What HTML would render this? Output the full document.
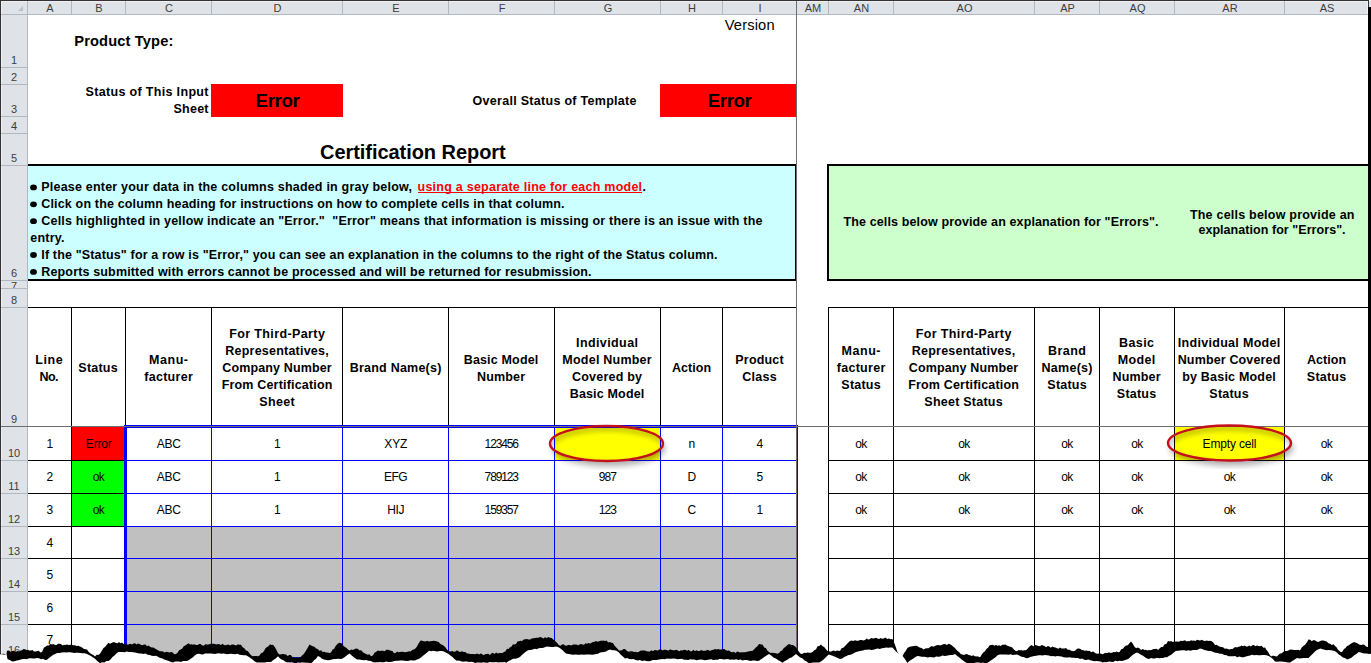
<!DOCTYPE html>
<html><head><meta charset="utf-8"><title>Certification Report</title>
<style>
html,body{margin:0;padding:0;background:#fff;width:1371px;height:663px;overflow:hidden}
svg{display:block}
text{font-family:"Liberation Sans",sans-serif;fill:#000;white-space:pre}
.hd{font-size:11px;fill:#3c3c3c}
.b{font-size:12.5px;font-weight:bold}
.d{font-size:12px}
.pt{font-size:14.67px;font-weight:bold}
.ver{font-size:14.67px}
.err{font-size:18.67px;font-weight:bold}
.cr{font-size:20px;font-weight:bold}
</style></head><body>
<svg width="1371" height="663" viewBox="0 0 1371 663" shape-rendering="crispEdges">
<defs>
<filter id="blur" x="-20%" y="-50%" width="140%" height="200%"><feGaussianBlur stdDeviation="3"/></filter>
<filter id="blur2" x="-20%" y="-50%" width="140%" height="200%"><feGaussianBlur stdDeviation="2"/></filter>
<radialGradient id="yg" cx="50%" cy="55%" r="50%"><stop offset="0.7" stop-color="#ffff00"/><stop offset="1" stop-color="#d8d800"/></radialGradient>
</defs>
<rect x="0" y="0" width="1371" height="663" fill="#ffffff"/>
<rect x="211" y="84" width="132" height="33" fill="#ff0000"/>
<rect x="660" y="84" width="136" height="33" fill="#ff0000"/>
<rect x="28" y="166" width="767" height="113" fill="#ccffff"/>
<rect x="829" y="166" width="540" height="113" fill="#ccffcc"/>
<rect x="72" y="427" width="52" height="33" fill="#ff0000"/>
<rect x="72" y="461" width="52" height="32" fill="#00ff00"/>
<rect x="72" y="494" width="52" height="32" fill="#00ff00"/>
<rect x="555" y="427" width="105" height="33" fill="#ffff00"/>
<rect x="1175" y="427" width="109" height="33" fill="#ffff00"/>
<rect x="126" y="527" width="670" height="136" fill="#c0c0c0"/>
<rect x="28" y="164" width="769" height="2" fill="#000000"/>
<rect x="28" y="279" width="769" height="2" fill="#000000"/>
<rect x="795" y="164" width="2" height="117" fill="#000000"/>
<rect x="827" y="164" width="542" height="2" fill="#000000"/>
<rect x="827" y="279" width="542" height="2" fill="#000000"/>
<rect x="827" y="164" width="2" height="117" fill="#000000"/>
<rect x="28" y="307" width="769" height="1" fill="#000000"/>
<rect x="71" y="307" width="1" height="120" fill="#000000"/>
<rect x="125" y="307" width="1" height="120" fill="#000000"/>
<rect x="211" y="307" width="1" height="120" fill="#000000"/>
<rect x="342" y="307" width="1" height="120" fill="#000000"/>
<rect x="448" y="307" width="1" height="120" fill="#000000"/>
<rect x="554" y="307" width="1" height="120" fill="#000000"/>
<rect x="660" y="307" width="1" height="120" fill="#000000"/>
<rect x="722" y="307" width="1" height="120" fill="#000000"/>
<rect x="828" y="307" width="541" height="1" fill="#000000"/>
<rect x="828" y="307" width="1" height="357" fill="#000000"/>
<rect x="893" y="307" width="1" height="357" fill="#000000"/>
<rect x="1034" y="307" width="1" height="357" fill="#000000"/>
<rect x="1099" y="307" width="1" height="357" fill="#000000"/>
<rect x="1174" y="307" width="1" height="357" fill="#000000"/>
<rect x="1284" y="307" width="1" height="357" fill="#000000"/>
<rect x="28" y="460" width="97" height="1" fill="#000000"/>
<rect x="125" y="460" width="672" height="1" fill="#0000ff"/>
<rect x="828" y="460" width="541" height="1" fill="#000000"/>
<rect x="28" y="493" width="97" height="1" fill="#000000"/>
<rect x="125" y="493" width="672" height="1" fill="#0000ff"/>
<rect x="828" y="493" width="541" height="1" fill="#000000"/>
<rect x="28" y="526" width="97" height="1" fill="#000000"/>
<rect x="125" y="526" width="672" height="1" fill="#0000ff"/>
<rect x="828" y="526" width="541" height="1" fill="#000000"/>
<rect x="28" y="558" width="97" height="1" fill="#000000"/>
<rect x="125" y="558" width="672" height="1" fill="#0000ff"/>
<rect x="828" y="558" width="541" height="1" fill="#000000"/>
<rect x="28" y="591" width="97" height="1" fill="#000000"/>
<rect x="125" y="591" width="672" height="1" fill="#0000ff"/>
<rect x="828" y="591" width="541" height="1" fill="#000000"/>
<rect x="28" y="624" width="97" height="1" fill="#000000"/>
<rect x="125" y="624" width="672" height="1" fill="#0000ff"/>
<rect x="828" y="624" width="541" height="1" fill="#000000"/>
<rect x="28" y="657" width="97" height="1" fill="#000000"/>
<rect x="125" y="657" width="672" height="1" fill="#0000ff"/>
<rect x="828" y="657" width="541" height="1" fill="#000000"/>
<rect x="71" y="426" width="1" height="238" fill="#000000"/>
<rect x="211" y="426" width="1" height="238" fill="#0000ff"/>
<rect x="342" y="426" width="1" height="238" fill="#0000ff"/>
<rect x="448" y="426" width="1" height="238" fill="#0000ff"/>
<rect x="554" y="426" width="1" height="238" fill="#0000ff"/>
<rect x="660" y="426" width="1" height="238" fill="#0000ff"/>
<rect x="722" y="426" width="1" height="238" fill="#0000ff"/>
<rect x="124" y="425" width="3" height="239" fill="#0000ff"/>
<rect x="124" y="425" width="674" height="3" fill="#0000ff"/>
<rect x="796" y="425" width="2" height="239" fill="#0000ff"/>
<rect x="1" y="1" width="1370" height="13" fill="#dfe3e8"/>
<rect x="1" y="1" width="26" height="662" fill="#dfe3e8"/>
<rect x="1" y="1" width="1367" height="1" fill="#eef0f3"/>
<rect x="1" y="1" width="1" height="662" fill="#eef0f3"/>
<rect x="1" y="14" width="1367" height="1" fill="#b2b8bf"/>
<rect x="27" y="1" width="1" height="662" fill="#b2b8bf"/>
<rect x="71" y="1" width="1" height="13" fill="#b2b8bf"/>
<rect x="125" y="1" width="1" height="13" fill="#b2b8bf"/>
<rect x="211" y="1" width="1" height="13" fill="#b2b8bf"/>
<rect x="342" y="1" width="1" height="13" fill="#b2b8bf"/>
<rect x="448" y="1" width="1" height="13" fill="#b2b8bf"/>
<rect x="554" y="1" width="1" height="13" fill="#b2b8bf"/>
<rect x="660" y="1" width="1" height="13" fill="#b2b8bf"/>
<rect x="722" y="1" width="1" height="13" fill="#b2b8bf"/>
<rect x="796" y="1" width="1" height="13" fill="#b2b8bf"/>
<rect x="828" y="1" width="1" height="13" fill="#b2b8bf"/>
<rect x="893" y="1" width="1" height="13" fill="#b2b8bf"/>
<rect x="1034" y="1" width="1" height="13" fill="#b2b8bf"/>
<rect x="1099" y="1" width="1" height="13" fill="#b2b8bf"/>
<rect x="1174" y="1" width="1" height="13" fill="#b2b8bf"/>
<rect x="1284" y="1" width="1" height="13" fill="#b2b8bf"/>
<rect x="1" y="67" width="26" height="1" fill="#b2b8bf"/>
<rect x="1" y="84" width="26" height="1" fill="#b2b8bf"/>
<rect x="1" y="116" width="26" height="1" fill="#b2b8bf"/>
<rect x="1" y="133" width="26" height="1" fill="#b2b8bf"/>
<rect x="1" y="165" width="26" height="1" fill="#b2b8bf"/>
<rect x="1" y="280" width="26" height="1" fill="#b2b8bf"/>
<rect x="1" y="288" width="26" height="1" fill="#b2b8bf"/>
<rect x="1" y="307" width="26" height="1" fill="#b2b8bf"/>
<rect x="1" y="426" width="26" height="1" fill="#b2b8bf"/>
<rect x="1" y="460" width="26" height="1" fill="#b2b8bf"/>
<rect x="1" y="493" width="26" height="1" fill="#b2b8bf"/>
<rect x="1" y="526" width="26" height="1" fill="#b2b8bf"/>
<rect x="1" y="558" width="26" height="1" fill="#b2b8bf"/>
<rect x="1" y="591" width="26" height="1" fill="#b2b8bf"/>
<rect x="1" y="624" width="26" height="1" fill="#b2b8bf"/>
<rect x="1" y="657" width="26" height="1" fill="#b2b8bf"/>
<rect x="796" y="1" width="1" height="663" fill="#6e6e6e"/>
<rect x="1" y="426" width="1368" height="1" fill="#6e6e6e"/>
<rect x="0" y="0" width="1369" height="1" fill="#333333"/>
<rect x="0" y="0" width="1" height="664" fill="#333333"/>
<rect x="1368" y="7" width="3" height="657" fill="#000000"/>
<rect x="1368" y="0" width="1" height="7" fill="#333333"/>
<polygon points="23,6 23,11 18,11" fill="#b9c0c6" shape-rendering="geometricPrecision"/>
<rect x="1367" y="1" width="1" height="13" fill="#f4f5f7"/>
<text x="50.0" y="12" class="hd" text-anchor="middle">A</text>
<text x="99.0" y="12" class="hd" text-anchor="middle">B</text>
<text x="169.0" y="12" class="hd" text-anchor="middle">C</text>
<text x="277.5" y="12" class="hd" text-anchor="middle">D</text>
<text x="396.0" y="12" class="hd" text-anchor="middle">E</text>
<text x="502.0" y="12" class="hd" text-anchor="middle">F</text>
<text x="608.0" y="12" class="hd" text-anchor="middle">G</text>
<text x="692.0" y="12" class="hd" text-anchor="middle">H</text>
<text x="760.0" y="12" class="hd" text-anchor="middle">I</text>
<text x="813.0" y="12" class="hd" text-anchor="middle">AM</text>
<text x="861.5" y="12" class="hd" text-anchor="middle">AN</text>
<text x="964.5" y="12" class="hd" text-anchor="middle">AO</text>
<text x="1067.5" y="12" class="hd" text-anchor="middle">AP</text>
<text x="1137.5" y="12" class="hd" text-anchor="middle">AQ</text>
<text x="1230.0" y="12" class="hd" text-anchor="middle">AR</text>
<text x="1327.0" y="12" class="hd" text-anchor="middle">AS</text>
<clipPath id="r7"><rect x="1" y="281" width="26" height="7"/></clipPath>
<text x="14" y="64" class="hd" text-anchor="middle">1</text>
<text x="14" y="81" class="hd" text-anchor="middle">2</text>
<text x="14" y="113" class="hd" text-anchor="middle">3</text>
<text x="14" y="130" class="hd" text-anchor="middle">4</text>
<text x="14" y="162" class="hd" text-anchor="middle">5</text>
<text x="14" y="277" class="hd" text-anchor="middle">6</text>
<text x="14" y="290" class="hd" text-anchor="middle" clip-path="url(#r7)">7</text>
<text x="14" y="304" class="hd" text-anchor="middle">8</text>
<text x="14" y="423" class="hd" text-anchor="middle">9</text>
<text x="14" y="457" class="hd" text-anchor="middle">10</text>
<text x="14" y="490" class="hd" text-anchor="middle">11</text>
<text x="14" y="523" class="hd" text-anchor="middle">12</text>
<text x="14" y="555" class="hd" text-anchor="middle">13</text>
<text x="14" y="588" class="hd" text-anchor="middle">14</text>
<text x="14" y="621" class="hd" text-anchor="middle">15</text>
<text x="14" y="654" class="hd" text-anchor="middle">16</text>
<text x="74.30" y="46" class="pt" textLength="99.00" lengthAdjust="spacing">Product Type:</text>
<text x="724.70" y="30" class="ver" textLength="49.90" lengthAdjust="spacing">Version</text>
<text x="208.50" y="96" class="b" text-anchor="end" textLength="123.00" lengthAdjust="spacing">Status of This Input</text>
<text x="208.50" y="113" class="b" text-anchor="end" textLength="35.00" lengthAdjust="spacing">Sheet</text>
<text x="277.65" y="107" class="err" text-anchor="middle" textLength="44.10" lengthAdjust="spacing">Error</text>
<text x="472.50" y="105" class="b" textLength="164.00" lengthAdjust="spacing">Overall Status of Template</text>
<text x="729.75" y="107" class="err" text-anchor="middle" textLength="43.90" lengthAdjust="spacing">Error</text>
<text x="412.85" y="159" class="cr" text-anchor="middle" textLength="185.70" lengthAdjust="spacing">Certification Report</text>
<ellipse cx="33.5" cy="187.4" rx="3.4" ry="2.9" fill="#000" shape-rendering="geometricPrecision"/>
<text x="41.30" y="191.0" class="b" textLength="370.70" lengthAdjust="spacing">Please enter your data in the columns shaded in gray below,</text>
<text x="417.50" y="191.0" class="b" style="fill:#ff0000" textLength="224.60" lengthAdjust="spacing">using a separate line for each model</text>
<rect x="418" y="192" width="224" height="1" fill="#ff0000"/>
<text x="642.50" y="191.0" class="b">.</text>
<ellipse cx="33.5" cy="204.3" rx="3.4" ry="2.9" fill="#000" shape-rendering="geometricPrecision"/>
<text x="41.30" y="207.9" class="b" textLength="523.20" lengthAdjust="spacing">Click on the column heading for instructions on how to complete cells in that column.</text>
<ellipse cx="33.5" cy="221.2" rx="3.4" ry="2.9" fill="#000" shape-rendering="geometricPrecision"/>
<text x="41.30" y="224.8" class="b" textLength="721.20" lengthAdjust="spacing">Cells highlighted in yellow indicate an &quot;Error.&quot;  &quot;Error&quot; means that information is missing or there is an issue with the</text>
<text x="30.30" y="241.7" class="b" textLength="34.21" lengthAdjust="spacing">entry.</text>
<ellipse cx="33.5" cy="255.0" rx="3.4" ry="2.9" fill="#000" shape-rendering="geometricPrecision"/>
<text x="41.30" y="258.6" class="b" textLength="676.20" lengthAdjust="spacing">If the &quot;Status&quot; for a row is &quot;Error,&quot; you can see an explanation in the columns to the right of the Status column.</text>
<ellipse cx="33.5" cy="271.9" rx="3.4" ry="2.9" fill="#000" shape-rendering="geometricPrecision"/>
<text x="41.30" y="275.5" class="b" textLength="550.20" lengthAdjust="spacing">Reports submitted with errors cannot be processed and will be returned for resubmission.</text>
<text x="843.50" y="226" class="b" textLength="315.00" lengthAdjust="spacing">The cells below provide an explanation for &quot;Errors&quot;.</text>
<text x="1272.20" y="219" class="b" text-anchor="middle" textLength="164.60" lengthAdjust="spacing">The cells below provide an</text>
<text x="1272.00" y="234" class="b" text-anchor="middle" textLength="147.20" lengthAdjust="spacing">explanation for &quot;Errors&quot;.</text>
<text x="49.00" y="363.5" class="b" text-anchor="middle" textLength="27.50" lengthAdjust="spacing">Line</text>
<text x="49.00" y="380.5" class="b" text-anchor="middle" textLength="19.00" lengthAdjust="spacing">No.</text>
<text x="98.00" y="372.0" class="b" text-anchor="middle" textLength="39.30" lengthAdjust="spacing">Status</text>
<text x="168.50" y="363.5" class="b" text-anchor="middle" textLength="39.00" lengthAdjust="spacing">Manu-</text>
<text x="168.50" y="380.5" class="b" text-anchor="middle" textLength="48.50" lengthAdjust="spacing">facturer</text>
<text x="277.00" y="338.0" class="b" text-anchor="middle" textLength="95.70" lengthAdjust="spacing">For Third-Party</text>
<text x="277.00" y="355.0" class="b" text-anchor="middle" textLength="103.30" lengthAdjust="spacing">Representatives,</text>
<text x="277.00" y="372.0" class="b" text-anchor="middle" textLength="109.40" lengthAdjust="spacing">Company Number</text>
<text x="277.00" y="389.0" class="b" text-anchor="middle" textLength="110.70" lengthAdjust="spacing">From Certification</text>
<text x="277.00" y="406.0" class="b" text-anchor="middle" textLength="35.50" lengthAdjust="spacing">Sheet</text>
<text x="395.50" y="372.0" class="b" text-anchor="middle" textLength="91.70" lengthAdjust="spacing">Brand Name(s)</text>
<text x="501.00" y="363.5" class="b" text-anchor="middle" textLength="74.60" lengthAdjust="spacing">Basic Model</text>
<text x="501.00" y="380.5" class="b" text-anchor="middle" textLength="48.10" lengthAdjust="spacing">Number</text>
<text x="607.00" y="346.5" class="b" text-anchor="middle" textLength="62.00" lengthAdjust="spacing">Individual</text>
<text x="607.00" y="363.5" class="b" text-anchor="middle" textLength="89.30" lengthAdjust="spacing">Model Number</text>
<text x="607.00" y="380.5" class="b" text-anchor="middle" textLength="70.00" lengthAdjust="spacing">Covered by</text>
<text x="607.00" y="397.5" class="b" text-anchor="middle" textLength="74.60" lengthAdjust="spacing">Basic Model</text>
<text x="691.50" y="372.0" class="b" text-anchor="middle" textLength="39.20" lengthAdjust="spacing">Action</text>
<text x="759.50" y="363.5" class="b" text-anchor="middle" textLength="48.30" lengthAdjust="spacing">Product</text>
<text x="759.50" y="380.5" class="b" text-anchor="middle" textLength="34.60" lengthAdjust="spacing">Class</text>
<text x="861.00" y="355.0" class="b" text-anchor="middle" textLength="39.00" lengthAdjust="spacing">Manu-</text>
<text x="861.00" y="372.0" class="b" text-anchor="middle" textLength="48.50" lengthAdjust="spacing">facturer</text>
<text x="861.00" y="389.0" class="b" text-anchor="middle" textLength="39.30" lengthAdjust="spacing">Status</text>
<text x="963.50" y="338.0" class="b" text-anchor="middle" textLength="95.70" lengthAdjust="spacing">For Third-Party</text>
<text x="963.50" y="355.0" class="b" text-anchor="middle" textLength="103.30" lengthAdjust="spacing">Representatives,</text>
<text x="963.50" y="372.0" class="b" text-anchor="middle" textLength="109.40" lengthAdjust="spacing">Company Number</text>
<text x="963.50" y="389.0" class="b" text-anchor="middle" textLength="110.70" lengthAdjust="spacing">From Certification</text>
<text x="963.50" y="406.0" class="b" text-anchor="middle" textLength="78.40" lengthAdjust="spacing">Sheet Status</text>
<text x="1067.00" y="355.0" class="b" text-anchor="middle" textLength="38.00" lengthAdjust="spacing">Brand</text>
<text x="1067.00" y="372.0" class="b" text-anchor="middle" textLength="51.00" lengthAdjust="spacing">Name(s)</text>
<text x="1067.00" y="389.0" class="b" text-anchor="middle" textLength="39.30" lengthAdjust="spacing">Status</text>
<text x="1136.50" y="346.5" class="b" text-anchor="middle" textLength="35.00" lengthAdjust="spacing">Basic</text>
<text x="1136.50" y="363.5" class="b" text-anchor="middle" textLength="37.30" lengthAdjust="spacing">Model</text>
<text x="1136.50" y="380.5" class="b" text-anchor="middle" textLength="48.10" lengthAdjust="spacing">Number</text>
<text x="1136.50" y="397.5" class="b" text-anchor="middle" textLength="39.30" lengthAdjust="spacing">Status</text>
<text x="1229.00" y="346.5" class="b" text-anchor="middle" textLength="102.50" lengthAdjust="spacing">Individual Model</text>
<text x="1229.00" y="363.5" class="b" text-anchor="middle" textLength="102.60" lengthAdjust="spacing">Number Covered</text>
<text x="1229.00" y="380.5" class="b" text-anchor="middle" textLength="93.60" lengthAdjust="spacing">by Basic Model</text>
<text x="1229.00" y="397.5" class="b" text-anchor="middle" textLength="39.30" lengthAdjust="spacing">Status</text>
<text x="1326.50" y="363.5" class="b" text-anchor="middle" textLength="39.20" lengthAdjust="spacing">Action</text>
<text x="1326.50" y="380.5" class="b" text-anchor="middle" textLength="39.30" lengthAdjust="spacing">Status</text>
<text x="49.80" y="448" class="d" text-anchor="middle">1</text>
<text x="98.80" y="448" class="d" text-anchor="middle" textLength="26.00" lengthAdjust="spacing">Error</text>
<text x="168.80" y="448" class="d" text-anchor="middle" textLength="24.20" lengthAdjust="spacing">ABC</text>
<text x="277.30" y="448" class="d" text-anchor="middle">1</text>
<text x="395.80" y="448" class="d" text-anchor="middle" textLength="23.30" lengthAdjust="spacing">XYZ</text>
<text x="501.80" y="448" class="d" text-anchor="middle" textLength="34.40" lengthAdjust="spacing">123456</text>
<text x="691.80" y="448" class="d" text-anchor="middle">n</text>
<text x="759.80" y="448" class="d" text-anchor="middle">4</text>
<text x="861.30" y="448" class="d" text-anchor="middle" textLength="12.10" lengthAdjust="spacing">ok</text>
<text x="964.30" y="448" class="d" text-anchor="middle" textLength="12.10" lengthAdjust="spacing">ok</text>
<text x="1067.30" y="448" class="d" text-anchor="middle" textLength="12.10" lengthAdjust="spacing">ok</text>
<text x="1137.30" y="448" class="d" text-anchor="middle" textLength="12.10" lengthAdjust="spacing">ok</text>
<text x="1326.80" y="448" class="d" text-anchor="middle" textLength="12.10" lengthAdjust="spacing">ok</text>
<text x="49.80" y="481" class="d" text-anchor="middle">2</text>
<text x="98.80" y="481" class="d" text-anchor="middle" textLength="12.10" lengthAdjust="spacing">ok</text>
<text x="168.80" y="481" class="d" text-anchor="middle" textLength="24.20" lengthAdjust="spacing">ABC</text>
<text x="277.30" y="481" class="d" text-anchor="middle">1</text>
<text x="395.80" y="481" class="d" text-anchor="middle" textLength="23.60" lengthAdjust="spacing">EFG</text>
<text x="501.80" y="481" class="d" text-anchor="middle" textLength="34.40" lengthAdjust="spacing">789123</text>
<text x="607.80" y="481" class="d" text-anchor="middle" textLength="18.20" lengthAdjust="spacing">987</text>
<text x="691.80" y="481" class="d" text-anchor="middle">D</text>
<text x="759.80" y="481" class="d" text-anchor="middle">5</text>
<text x="861.30" y="481" class="d" text-anchor="middle" textLength="12.10" lengthAdjust="spacing">ok</text>
<text x="964.30" y="481" class="d" text-anchor="middle" textLength="12.10" lengthAdjust="spacing">ok</text>
<text x="1067.30" y="481" class="d" text-anchor="middle" textLength="12.10" lengthAdjust="spacing">ok</text>
<text x="1137.30" y="481" class="d" text-anchor="middle" textLength="12.10" lengthAdjust="spacing">ok</text>
<text x="1229.80" y="481" class="d" text-anchor="middle" textLength="12.10" lengthAdjust="spacing">ok</text>
<text x="1326.80" y="481" class="d" text-anchor="middle" textLength="12.10" lengthAdjust="spacing">ok</text>
<text x="49.80" y="514" class="d" text-anchor="middle">3</text>
<text x="98.80" y="514" class="d" text-anchor="middle" textLength="12.10" lengthAdjust="spacing">ok</text>
<text x="168.80" y="514" class="d" text-anchor="middle" textLength="24.20" lengthAdjust="spacing">ABC</text>
<text x="277.30" y="514" class="d" text-anchor="middle">1</text>
<text x="395.80" y="514" class="d" text-anchor="middle" textLength="17.20" lengthAdjust="spacing">HIJ</text>
<text x="501.80" y="514" class="d" text-anchor="middle" textLength="34.40" lengthAdjust="spacing">159357</text>
<text x="607.80" y="514" class="d" text-anchor="middle" textLength="18.20" lengthAdjust="spacing">123</text>
<text x="691.80" y="514" class="d" text-anchor="middle">C</text>
<text x="759.80" y="514" class="d" text-anchor="middle">1</text>
<text x="861.30" y="514" class="d" text-anchor="middle" textLength="12.10" lengthAdjust="spacing">ok</text>
<text x="964.30" y="514" class="d" text-anchor="middle" textLength="12.10" lengthAdjust="spacing">ok</text>
<text x="1067.30" y="514" class="d" text-anchor="middle" textLength="12.10" lengthAdjust="spacing">ok</text>
<text x="1137.30" y="514" class="d" text-anchor="middle" textLength="12.10" lengthAdjust="spacing">ok</text>
<text x="1229.80" y="514" class="d" text-anchor="middle" textLength="12.10" lengthAdjust="spacing">ok</text>
<text x="1326.80" y="514" class="d" text-anchor="middle" textLength="12.10" lengthAdjust="spacing">ok</text>
<text x="49.80" y="546.5" class="d" text-anchor="middle">4</text>
<text x="49.80" y="579" class="d" text-anchor="middle">5</text>
<text x="49.80" y="611.5" class="d" text-anchor="middle">6</text>
<text x="49.80" y="644" class="d" text-anchor="middle">7</text>
<mask id="om1"><rect x="0" y="0" width="1371" height="663" fill="#fff"/><ellipse cx="606.5" cy="443.5" rx="56.5" ry="17.5" fill="#000" shape-rendering="geometricPrecision"/></mask>
<clipPath id="ic1"><ellipse cx="606.5" cy="443.5" rx="56.5" ry="17.5" shape-rendering="geometricPrecision"/></clipPath>
<g mask="url(#om1)"><ellipse cx="608.5" cy="448.5" rx="56.5" ry="17.5" fill="#000" opacity="0.33" filter="url(#blur)" shape-rendering="geometricPrecision"/></g>
<g clip-path="url(#ic1)"><ellipse cx="607.5" cy="447.0" rx="57.5" ry="18.5" fill="none" stroke="#000" stroke-width="7" opacity="0.18" filter="url(#blur2)" shape-rendering="geometricPrecision"/></g>
<ellipse cx="606.5" cy="443.5" rx="56.5" ry="17.5" fill="none" stroke="#c4101c" stroke-width="2.4" shape-rendering="geometricPrecision"/>
<mask id="om2"><rect x="0" y="0" width="1371" height="663" fill="#fff"/><ellipse cx="1229.5" cy="443" rx="61.5" ry="17.5" fill="#000" shape-rendering="geometricPrecision"/></mask>
<clipPath id="ic2"><ellipse cx="1229.5" cy="443" rx="61.5" ry="17.5" shape-rendering="geometricPrecision"/></clipPath>
<g mask="url(#om2)"><ellipse cx="1231.5" cy="448" rx="61.5" ry="17.5" fill="#000" opacity="0.33" filter="url(#blur)" shape-rendering="geometricPrecision"/></g>
<g clip-path="url(#ic2)"><ellipse cx="1230.5" cy="446.5" rx="62.5" ry="18.5" fill="none" stroke="#000" stroke-width="7" opacity="0.18" filter="url(#blur2)" shape-rendering="geometricPrecision"/></g>
<ellipse cx="1229.5" cy="443" rx="61.5" ry="17.5" fill="none" stroke="#c4101c" stroke-width="2.4" shape-rendering="geometricPrecision"/>
<text x="1229.50" y="448" class="d" text-anchor="middle" textLength="53.80" lengthAdjust="spacing">Empty cell</text>
<g shape-rendering="geometricPrecision"><polygon points="0.0,653.5 1.6,654.1 3.2,653.8 4.9,654.2 6.5,654.2 7.0,650.7 9.0,650.6 10.7,652.0 12.3,650.9 14.0,650.8 15.7,652.1 17.3,651.0 19.0,651.6 20.5,650.5 22.0,650.3 23.5,648.9 25.0,649.2 26.5,650.0 28.0,649.7 29.5,650.4 31.0,650.6 32.5,649.9 34.0,651.5 35.6,651.4 37.2,651.0 38.8,650.8 40.4,652.5 42.0,652.0 44.0,647.4 45.5,646.7 47.0,645.4 48.7,645.4 50.3,644.1 52.0,644.5 53.5,644.0 55.0,645.0 56.5,645.0 58.0,643.7 59.5,643.8 61.0,644.1 62.5,645.5 64.0,644.7 65.5,645.1 67.0,644.6 68.6,645.0 70.2,644.8 71.8,644.7 73.4,645.2 75.0,645.2 76.7,645.9 78.3,645.7 80.0,646.4 81.8,647.3 83.5,648.7 85.2,649.2 87.0,649.4 88.6,651.8 90.2,653.2 91.8,654.3 93.4,654.9 95.0,656.4 96.7,654.7 98.3,655.1 100.0,653.8 101.8,650.8 103.5,647.9 105.2,646.8 107.0,644.6 108.5,642.7 110.0,643.8 111.5,642.9 113.0,642.2 114.5,642.2 116.0,642.9 117.5,643.3 119.0,642.0 120.5,643.3 122.0,642.4 123.5,643.9 125.0,643.4 126.8,644.4 128.5,644.6 130.2,643.7 132.0,644.6 133.5,643.5 135.0,643.3 136.5,644.5 138.0,643.6 139.5,644.1 141.0,644.7 142.5,645.2 144.0,644.6 145.5,644.6 147.0,646.3 148.5,645.5 150.0,646.8 151.7,647.5 153.3,647.4 155.0,648.4 156.7,649.4 158.3,650.4 160.0,651.2 161.6,651.3 163.1,651.6 164.7,652.4 166.3,651.8 167.9,651.9 169.4,652.6 171.0,651.9 172.7,652.6 174.3,654.3 176.0,654.0 177.6,652.7 179.1,650.3 180.7,649.6 182.3,648.4 183.9,646.0 185.4,645.6 187.0,644.2 188.5,643.3 190.0,644.4 191.5,644.2 193.0,644.7 194.5,644.2 196.0,645.0 197.5,645.1 199.0,643.9 200.5,644.1 202.0,645.3 203.7,645.7 205.3,644.2 207.0,644.4 208.7,644.5 210.3,643.8 212.0,643.8 213.5,643.8 215.0,644.0 216.5,644.5 218.0,644.0 219.5,644.3 221.0,645.1 222.5,643.8 224.0,644.9 225.5,645.3 227.0,644.7 228.6,644.5 230.1,645.5 231.7,644.5 233.2,644.4 234.8,644.9 236.3,645.4 237.9,644.3 239.4,644.7 241.0,644.7 242.7,647.3 244.3,648.2 246.0,650.6 247.7,651.1 249.3,653.0 251.0,655.3 252.8,656.2 254.5,655.9 256.2,656.0 258.0,656.3 259.5,655.4 261.0,653.2 262.5,652.7 264.0,651.1 265.5,648.3 267.0,646.9 268.5,646.2 270.0,644.3 271.5,645.1 273.0,644.7 274.6,646.8 276.2,649.6 277.9,653.0 279.5,654.6 281.2,654.2 283.0,653.9 284.6,654.2 286.1,654.6 287.7,655.9 289.2,654.9 290.8,655.0 292.3,657.1 293.9,657.3 295.4,657.9 297.0,657.3 298.7,657.7 300.3,657.2 302.0,655.5 303.5,654.2 305.0,652.2 306.5,649.7 308.0,647.2 309.5,644.6 311.1,645.6 312.8,646.2 314.4,646.8 316.1,648.6 317.7,648.9 319.4,650.7 321.0,650.2 322.7,652.0 324.3,651.8 326.0,652.5 327.7,652.6 329.3,652.9 331.0,652.5 332.6,649.5 334.2,648.8 335.8,645.8 337.4,644.0 339.0,642.7 340.5,643.1 342.0,643.5 343.5,646.1 345.0,647.1 346.5,648.1 348.0,649.6 349.7,650.5 351.3,649.6 353.0,650.0 354.7,649.1 356.3,648.6 358.0,649.1 359.6,650.4 361.2,650.2 362.9,652.2 364.5,653.3 366.1,653.9 367.8,654.8 369.4,654.2 371.0,656.2 372.8,655.4 374.5,652.7 376.2,651.8 378.0,650.6 379.7,651.0 381.3,650.7 383.0,650.7 384.7,651.2 386.3,649.7 388.0,649.7 389.5,650.3 391.0,650.8 392.5,651.1 394.0,653.3 395.5,653.0 397.0,651.5 398.5,652.2 400.0,651.9 401.5,651.8 403.1,651.8 404.6,652.3 406.1,652.1 407.6,651.7 409.1,651.3 410.6,651.5 412.2,649.9 413.8,649.4 415.4,648.4 417.0,646.6 418.8,643.1 420.6,640.4 422.2,640.8 423.9,641.2 425.5,641.5 427.2,640.8 428.8,641.5 430.4,641.2 432.1,640.9 433.7,640.8 435.4,641.0 437.0,641.4 438.7,642.1 440.4,643.9 442.1,644.8 443.8,645.7 445.5,647.5 447.2,650.0 449.0,651.0 450.6,651.4 452.2,651.1 453.8,651.7 455.4,651.5 457.0,650.3 458.7,651.6 460.3,651.9 462.0,651.3 463.7,652.1 465.3,651.9 467.0,653.6 468.5,653.5 470.0,654.0 471.5,654.0 473.0,654.0 474.5,654.3 476.0,654.1 477.5,653.5 479.0,654.5 480.5,653.6 482.0,654.0 483.5,655.3 485.0,654.2 486.6,654.0 488.2,653.7 489.8,654.9 491.3,653.4 492.9,652.8 494.5,654.0 496.1,652.5 497.7,653.5 499.2,652.9 500.8,652.9 502.4,652.9 504.0,651.9 505.5,651.2 507.0,648.7 508.5,648.9 510.0,647.3 511.5,646.5 513.0,644.3 514.5,644.6 516.0,644.0 517.5,641.6 519.0,641.2 520.5,640.7 522.1,640.9 523.7,639.6 525.3,639.2 526.9,639.1 528.5,639.5 530.1,639.4 531.7,638.5 533.4,638.3 535.0,638.1 536.7,637.8 538.4,637.8 540.0,636.9 541.7,637.5 543.4,638.4 545.0,637.3 546.7,637.9 548.4,636.9 550.0,637.8 551.7,638.0 553.5,639.7 555.4,641.3 557.2,643.1 559.0,645.3 560.5,645.7 562.0,644.4 563.5,644.3 565.0,645.4 566.5,645.7 568.0,645.0 569.7,644.9 571.3,645.4 573.0,644.4 574.7,644.6 576.3,644.5 578.0,645.2 579.5,644.4 581.0,644.0 582.5,644.6 584.0,644.8 585.5,643.3 587.0,643.8 588.5,643.0 590.0,643.6 591.5,642.8 593.0,642.0 594.5,641.7 596.0,641.1 597.5,641.7 599.0,641.3 600.5,640.7 602.0,640.8 603.5,640.5 605.0,641.1 606.6,640.4 608.2,642.4 609.8,642.0 611.4,642.7 613.0,642.9 614.5,645.5 616.0,647.3 617.5,648.7 619.0,650.5 620.5,650.4 622.0,650.2 623.5,649.0 625.0,649.1 627.0,651.1 629.0,651.7 630.6,651.2 632.2,651.2 633.8,652.0 635.4,651.8 637.0,652.2 638.6,652.0 640.2,650.8 641.8,650.6 643.4,650.6 645.0,650.4 646.6,651.3 648.2,651.4 649.8,651.4 651.4,650.2 653.0,651.2 654.6,650.1 656.2,650.2 657.8,650.6 659.4,649.4 661.0,649.3 662.5,650.6 664.1,649.7 665.6,649.8 667.1,650.3 668.7,650.5 670.2,649.3 671.7,649.9 673.3,650.2 674.8,650.3 676.3,649.8 677.9,650.5 679.4,651.2 680.9,650.2 682.5,650.5 684.0,649.8 685.6,650.1 687.1,650.8 688.7,649.8 690.2,651.2 691.8,651.2 693.4,649.8 694.9,651.3 696.5,650.3 698.0,651.0 699.6,651.0 701.1,650.1 702.7,650.8 704.2,650.7 705.8,650.8 707.3,649.7 708.9,650.5 710.4,650.8 711.9,650.1 713.5,649.8 715.0,648.9 716.5,649.5 718.1,649.1 719.6,649.6 721.2,649.4 722.7,649.1 724.3,648.9 725.9,650.2 727.5,650.7 729.2,650.4 730.8,652.1 732.4,652.2 734.0,651.7 735.5,653.1 737.1,651.6 738.6,651.9 740.2,652.6 741.7,652.3 743.3,652.2 744.8,652.3 746.4,651.9 747.9,651.6 749.5,651.3 751.0,651.0 752.6,650.7 754.2,649.3 755.8,647.4 757.4,646.2 759.0,644.0 760.8,644.2 762.6,644.8 764.2,647.5 765.8,647.9 767.4,650.6 769.0,651.9 770.7,653.1 772.4,652.7 774.1,652.9 775.8,653.3 777.5,653.8 779.1,652.9 780.6,650.9 782.2,650.6 783.8,648.0 785.3,647.0 786.9,645.5 788.4,644.3 790.0,644.2 791.5,645.0 793.0,645.0 794.5,645.9 796.0,647.2 797.7,649.9 799.3,652.2 801.0,654.1 802.6,653.7 804.3,652.7 805.9,653.0 807.6,652.4 809.2,652.8 810.9,652.7 812.5,651.9 814.2,650.2 815.9,649.4 817.6,646.3 819.3,646.0 821.0,644.4 822.6,646.3 824.2,647.1 825.9,649.3 827.5,651.1 829.1,651.2 830.6,651.7 832.2,651.1 833.8,650.4 835.3,651.3 836.9,650.6 838.4,650.7 840.0,650.9 841.7,648.0 843.3,647.8 845.0,646.0 846.7,644.2 848.3,642.6 850.0,640.9 851.7,640.4 853.3,641.1 855.0,640.2 856.7,640.7 858.3,640.7 860.0,640.0 861.7,640.0 863.3,640.4 865.0,640.0 866.6,638.5 868.1,639.6 869.7,639.2 871.2,638.1 872.8,638.5 874.4,638.2 875.9,637.8 877.5,638.5 879.0,639.1 880.6,637.9 882.1,638.8 883.7,638.4 885.4,637.5 887.2,638.9 888.9,638.6 890.7,639.3 892.4,639.1 895.0,644.7 897.4,652.1 899.1,654.0 900.7,655.2 902.4,656.2 904.1,652.9 905.7,651.0 907.4,648.0 909.1,647.0 910.7,646.5 912.4,646.2 914.1,646.1 915.7,645.7 917.4,646.0 919.0,647.2 920.5,647.7 922.0,648.3 923.6,649.6 925.2,648.4 926.9,648.2 928.5,648.2 930.1,647.0 931.7,646.1 933.4,646.8 935.0,646.0 936.5,645.2 938.0,645.1 939.5,645.3 941.0,645.3 942.5,644.5 944.0,643.9 945.5,644.2 947.0,645.1 948.5,643.8 950.0,644.2 951.7,645.2 953.3,646.7 955.0,648.1 956.5,650.1 958.0,651.3 959.5,652.6 961.0,654.3 962.5,654.4 964.0,655.0 965.5,654.2 967.0,654.1 968.5,654.9 970.1,655.2 971.7,656.1 973.3,655.2 974.9,656.2 976.5,656.5 978.1,656.2 979.7,658.2 981.4,654.9 983.0,652.7 984.7,651.5 986.4,648.9 988.0,647.8 989.7,645.3 991.3,644.9 992.8,644.7 994.4,645.8 996.0,645.0 997.6,645.8 999.1,645.2 1000.7,646.0 1002.3,644.8 1003.9,644.7 1005.4,644.6 1007.0,645.6 1008.7,646.2 1010.3,646.7 1012.0,647.3 1013.7,649.3 1015.3,650.8 1017.0,651.2 1018.5,650.1 1020.0,650.2 1021.5,650.3 1023.0,650.4 1024.5,650.2 1026.0,650.2 1027.8,648.6 1029.7,646.3 1031.5,644.9 1033.3,646.2 1035.2,645.1 1037.0,645.5 1038.5,646.0 1040.1,646.3 1041.6,644.9 1043.2,645.6 1044.7,646.3 1046.2,647.2 1047.8,645.9 1049.3,646.5 1050.8,647.7 1052.4,646.6 1053.9,647.3 1055.5,647.5 1057.0,648.3 1058.5,648.8 1060.0,647.4 1061.5,648.4 1063.0,648.4 1064.5,648.6 1066.0,648.1 1067.8,649.7 1069.5,649.7 1071.2,650.7 1073.0,651.3 1075.0,650.8 1077.0,648.7 1078.6,648.6 1080.1,648.8 1081.7,650.1 1083.3,650.2 1084.9,650.7 1086.4,650.5 1088.0,651.0 1089.6,650.8 1091.2,652.2 1092.9,651.4 1094.5,652.6 1096.1,653.5 1097.8,653.8 1099.4,653.2 1101.0,653.8 1102.7,654.3 1104.3,653.3 1106.0,653.1 1107.5,653.1 1109.0,652.3 1110.5,653.1 1112.0,652.8 1113.5,652.1 1115.0,652.2 1116.5,651.6 1118.0,652.2 1119.6,652.0 1121.2,649.2 1122.9,648.8 1124.5,646.7 1126.1,645.4 1127.8,645.2 1129.4,643.2 1131.0,641.6 1132.7,643.6 1134.3,646.4 1136.0,648.2 1137.7,647.5 1139.4,648.3 1141.1,650.0 1142.8,649.1 1144.5,650.1 1146.0,649.8 1147.5,650.4 1149.0,650.0 1150.5,650.2 1152.0,649.7 1153.5,649.0 1155.0,648.9 1156.5,648.7 1158.0,650.0 1159.5,648.6 1161.2,646.9 1162.9,647.1 1164.6,644.3 1166.3,644.0 1168.0,641.1 1169.6,641.6 1171.1,641.1 1172.7,642.1 1174.3,641.6 1175.9,641.5 1177.4,641.6 1179.0,641.7 1180.5,640.7 1182.0,641.1 1183.5,640.8 1185.0,640.2 1186.5,641.4 1188.0,641.0 1189.5,641.3 1191.0,640.2 1192.5,640.8 1194.0,640.6 1195.5,641.0 1197.0,639.8 1198.6,640.3 1200.2,640.6 1201.9,639.8 1203.5,640.7 1205.1,641.0 1206.8,640.5 1208.4,640.9 1210.0,640.8 1211.7,641.2 1213.3,642.6 1215.0,644.9 1216.7,644.8 1218.3,646.1 1220.0,646.7 1221.6,647.1 1223.1,647.2 1224.7,648.7 1226.3,648.6 1227.9,649.0 1229.4,649.4 1231.0,648.9 1232.5,649.0 1234.0,647.7 1235.5,647.0 1237.0,647.4 1238.5,646.8 1240.0,646.4 1241.5,645.6 1243.1,646.2 1244.6,645.5 1246.2,646.6 1247.7,646.5 1249.2,645.4 1250.8,646.6 1252.3,645.3 1253.8,645.1 1255.4,646.3 1256.9,645.6 1258.5,646.0 1260.0,646.3 1261.7,645.8 1263.3,647.8 1265.0,647.6 1266.5,649.9 1268.0,651.7 1269.5,654.4 1271.0,656.4 1272.5,655.8 1274.0,655.7 1275.5,656.2 1277.0,656.6 1278.6,654.7 1280.2,653.5 1281.8,653.2 1283.4,651.7 1285.0,650.9 1286.5,650.9 1288.0,650.7 1289.5,649.8 1291.0,649.4 1292.5,649.7 1294.0,649.9 1295.5,650.0 1297.0,650.1 1298.5,649.7 1300.0,650.6 1301.7,647.6 1303.4,645.9 1305.1,644.7 1306.8,642.6 1308.5,639.6 1310.2,639.8 1311.8,641.2 1313.5,640.0 1315.2,640.5 1316.8,641.6 1318.5,641.9 1320.1,640.9 1321.8,640.4 1323.4,640.4 1325.0,641.1 1326.7,641.4 1328.4,643.2 1330.1,643.8 1331.8,645.0 1333.5,644.2 1335.0,646.0 1336.5,647.3 1338.0,649.7 1339.5,651.1 1341.0,652.2 1342.5,651.5 1344.0,649.1 1345.5,647.9 1347.0,646.1 1348.5,645.5 1350.1,644.2 1351.8,643.3 1353.4,642.2 1355.0,642.3 1356.6,643.1 1358.1,643.7 1359.7,644.7 1361.3,645.0 1362.9,644.5 1364.4,644.8 1366.0,646.5 1367.7,647.0 1369.3,646.9 1371.0,647.4 1371,663 0,663" fill="#000"/><polygon points="0.0,654.3 2.2,654.2 4.3,654.7 6.5,654.1 7.5,659.0 10.0,660.3 12.5,661.4 14.6,661.3 16.7,660.4 18.8,660.3 20.8,659.5 22.9,659.1 25.0,658.9 27.0,659.2 29.0,658.3 31.0,658.2 33.0,658.5 35.0,658.6 37.0,658.1 39.0,658.3 41.0,659.3 43.0,658.7 45.0,660.0 47.0,659.8 49.0,658.1 51.0,656.5 53.0,655.1 55.0,654.0 57.3,652.9 59.7,652.9 62.0,652.5 64.0,652.3 66.0,652.6 68.0,652.2 70.0,652.2 72.0,652.4 74.0,653.0 76.0,652.8 78.0,652.7 80.0,653.1 82.3,653.2 84.7,653.3 87.0,654.0 89.0,655.1 91.0,655.9 93.0,657.5 95.0,658.7 97.5,661.2 100.0,663.2 102.1,662.3 104.2,662.5 106.4,661.1 108.5,660.9 110.5,659.4 112.5,657.0 114.5,655.5 116.5,653.2 118.5,652.0 120.6,652.1 122.7,651.9 124.8,652.2 126.8,651.6 128.9,652.0 131.0,651.9 133.1,652.2 135.1,652.4 137.2,653.1 139.3,653.5 141.3,653.4 143.4,653.9 145.5,653.6 147.6,654.7 149.7,655.0 151.8,655.7 153.9,655.9 156.0,655.8 158.0,656.8 160.0,658.0 162.0,658.2 164.2,659.6 166.5,660.2 168.8,661.1 171.0,662.0 173.0,662.5 175.0,661.6 177.0,661.6 179.0,661.6 181.0,661.9 183.0,660.9 185.0,661.1 187.0,661.0 189.0,660.0 191.0,658.5 193.0,657.2 195.0,655.2 197.0,653.9 199.0,653.8 201.0,654.3 203.0,654.4 205.0,653.6 207.0,653.6 209.0,653.6 211.0,653.6 213.0,653.8 215.0,653.9 217.0,653.6 219.0,653.3 221.0,653.7 223.0,653.6 225.0,653.8 227.0,654.2 229.0,653.9 231.0,653.7 233.1,654.0 235.3,654.2 237.4,653.8 239.6,654.8 241.7,654.9 243.9,655.2 246.0,655.3 248.2,656.5 250.4,658.1 252.6,659.4 254.8,661.5 257.0,662.6 259.0,662.5 261.0,662.5 263.0,662.4 265.0,662.5 267.0,662.1 269.0,662.0 271.0,662.1 273.3,660.1 275.7,658.5 278.0,656.3 280.0,658.6 282.0,659.7 284.0,660.6 286.0,662.2 288.0,662.3 290.0,662.4 292.0,662.2 294.0,662.9 296.0,663.1 298.0,662.6 300.0,662.7 302.0,662.4 304.0,662.4 306.0,662.7 308.0,662.7 310.0,663.3 312.0,662.7 314.0,660.2 316.0,658.8 318.0,656.0 320.0,657.0 322.0,658.7 324.0,659.5 326.0,659.9 328.0,660.2 330.0,659.9 332.0,659.6 334.0,659.0 336.0,659.0 338.0,658.7 340.0,659.1 342.0,658.7 344.5,657.3 347.0,655.2 349.5,653.4 352.0,655.8 354.5,657.7 357.0,659.4 359.3,659.6 361.6,660.0 363.9,660.2 366.1,660.1 368.4,660.7 370.7,660.9 374.0,662.5 376.0,662.3 378.0,662.3 380.0,662.0 382.0,662.2 384.0,662.3 386.1,661.6 388.1,662.0 390.2,662.0 392.2,661.8 394.3,661.1 396.4,660.8 398.4,660.7 400.5,660.6 402.6,660.5 404.6,660.8 406.7,661.0 408.8,660.8 410.8,660.3 412.9,660.4 414.9,660.4 417.0,659.6 419.0,658.7 421.0,657.4 423.0,655.8 425.0,654.3 427.0,652.5 429.0,650.7 431.1,651.3 433.3,650.8 435.4,651.3 437.6,651.5 439.7,650.9 441.9,650.9 444.0,651.4 446.1,652.8 448.3,653.8 450.4,655.4 452.5,657.0 454.7,659.3 456.8,660.8 458.8,660.4 460.9,661.3 462.9,661.7 464.9,661.6 466.9,661.5 468.9,662.0 471.0,661.8 473.0,661.9 475.1,662.9 477.2,662.5 479.3,662.4 481.4,662.8 483.5,662.3 485.6,662.8 487.7,662.7 489.8,662.1 491.9,662.2 494.0,662.2 496.1,662.1 498.2,662.5 500.3,662.2 502.4,662.3 504.5,662.0 506.6,662.8 508.7,661.0 510.9,659.9 513.0,658.8 515.5,658.8 518.0,657.9 520.2,656.7 522.4,654.5 524.5,652.8 526.7,651.0 528.7,650.1 530.7,650.1 532.7,649.4 534.7,648.8 536.7,649.2 538.7,648.2 540.7,648.0 542.7,647.9 544.7,647.3 546.7,646.6 549.0,646.8 551.2,646.9 553.5,647.1 555.7,646.4 558.0,646.9 560.1,648.3 562.3,650.0 564.5,652.2 566.6,653.7 568.9,654.0 571.2,654.4 573.4,654.7 575.7,654.4 578.0,654.8 580.0,654.7 582.0,654.6 584.0,654.7 586.0,654.5 588.0,654.5 590.0,654.4 592.0,654.8 594.0,654.5 596.0,654.1 598.0,653.7 600.0,652.4 602.0,652.2 604.0,652.1 606.0,651.4 608.0,650.2 610.0,649.6 612.2,650.3 614.3,650.2 616.5,650.7 618.6,652.3 620.8,654.7 622.9,656.5 625.0,658.4 627.1,658.0 629.2,658.9 631.4,659.2 633.5,659.0 635.6,660.0 637.7,660.5 639.9,660.0 642.1,661.0 644.3,660.6 646.5,661.0 648.5,661.3 650.6,660.9 652.6,660.0 654.7,660.1 656.7,660.0 658.8,659.6 660.8,659.2 662.9,659.1 664.9,659.3 667.0,658.4 669.0,658.8 671.1,658.7 673.3,658.4 675.4,658.8 677.6,659.2 679.7,659.1 681.9,658.8 684.0,659.8 686.1,659.7 688.2,660.0 690.2,659.3 692.3,659.5 694.4,659.4 696.5,660.3 698.6,659.7 700.7,659.5 702.8,659.8 704.9,660.2 707.0,660.1 709.1,659.5 711.2,659.3 713.2,660.1 715.3,659.7 717.4,659.8 719.5,659.1 721.6,659.0 723.7,659.6 725.8,659.3 727.9,658.9 730.0,659.7 732.1,659.6 734.1,659.8 736.2,659.2 738.3,660.1 740.4,659.5 742.4,660.4 744.5,660.1 746.6,660.1 748.6,660.4 750.7,660.9 752.8,660.4 754.9,660.4 756.9,660.9 759.0,660.7 761.0,659.3 763.0,658.0 765.0,656.5 767.0,655.3 769.0,654.1 771.2,655.6 773.5,657.5 775.8,658.4 778.0,660.1 780.2,661.2 782.5,662.8 784.8,661.1 787.0,659.9 789.2,658.2 791.5,657.4 793.8,655.8 796.0,654.0 798.1,655.7 800.2,657.6 802.4,658.3 804.5,660.4 806.6,661.5 808.7,663.0 810.8,663.1 812.8,662.5 814.9,662.4 816.9,662.4 819.0,662.5 821.0,661.6 823.6,659.6 826.1,657.0 828.7,654.4 831.0,655.2 833.2,656.1 835.5,656.9 837.7,657.9 840.0,658.9 842.1,658.6 844.3,657.1 846.4,656.0 848.6,654.9 850.7,654.7 852.9,653.8 855.0,652.6 857.0,651.7 859.0,651.2 861.0,650.8 863.0,650.4 865.0,649.7 867.1,649.7 869.2,649.4 871.3,649.9 873.4,649.7 875.5,649.0 877.6,648.5 879.8,649.1 881.9,648.2 884.0,648.1 886.1,647.5 888.2,647.7 890.3,647.6 892.4,647.4 896.0,651.5 898.1,653.2 900.3,654.1 902.4,655.8 904.9,659.1 907.4,662.9 909.4,661.1 911.4,659.7 913.4,658.6 915.4,657.1 917.4,656.1 919.5,656.2 921.6,656.7 923.7,656.8 925.7,657.0 927.8,657.4 929.9,657.1 932.0,657.2 934.1,657.6 936.2,656.5 938.3,656.8 940.4,656.4 942.5,655.5 944.5,656.0 946.6,655.8 948.7,655.3 950.8,655.1 952.9,654.9 955.0,653.9 957.0,655.8 959.0,657.2 961.0,659.0 963.0,660.4 965.0,661.9 967.0,663.1 969.0,663.4 971.0,663.2 973.0,663.2 975.0,662.7 977.0,662.5 979.0,662.6 981.0,662.9 983.0,662.6 985.0,663.3 987.0,663.1 989.1,661.7 991.2,660.2 993.4,658.8 995.5,657.2 997.6,655.3 999.7,654.6 1001.9,654.6 1004.0,654.5 1006.2,654.6 1008.4,654.8 1010.5,654.3 1012.7,655.1 1014.8,654.7 1017.0,654.6 1019.2,655.5 1021.5,656.7 1023.8,657.0 1026.0,658.2 1028.1,658.0 1030.2,657.0 1032.2,656.4 1034.3,656.0 1036.4,655.7 1038.5,655.3 1040.6,655.3 1042.7,655.5 1044.8,655.1 1046.8,655.3 1048.9,655.6 1051.0,656.2 1053.1,656.0 1055.2,656.4 1057.2,656.0 1059.3,656.2 1061.4,656.6 1063.5,657.2 1065.6,657.4 1067.7,657.5 1069.8,657.3 1071.8,657.7 1073.9,657.8 1076.0,658.0 1078.0,657.9 1080.1,659.0 1082.1,658.6 1084.2,659.7 1086.2,660.0 1088.3,659.4 1090.3,660.2 1092.3,660.8 1094.4,661.3 1096.4,661.1 1098.5,661.2 1100.5,661.5 1102.6,662.5 1104.6,662.1 1106.7,662.2 1108.9,661.6 1111.0,661.7 1113.2,661.9 1115.3,660.8 1117.4,661.3 1119.6,660.7 1121.7,660.9 1123.9,660.4 1126.0,659.7 1128.2,658.9 1130.4,656.9 1132.6,655.0 1134.8,653.4 1137.0,652.4 1139.0,653.6 1141.0,654.7 1143.0,655.8 1145.0,657.3 1147.0,658.5 1149.0,658.9 1151.0,657.9 1153.0,658.6 1155.0,658.5 1157.0,657.7 1159.0,658.3 1161.0,658.0 1163.0,658.1 1165.0,657.3 1167.0,657.3 1169.2,655.7 1171.3,654.7 1173.5,652.7 1175.7,650.9 1177.8,650.8 1180.0,650.6 1182.1,650.2 1184.2,650.2 1186.3,650.8 1188.5,650.2 1190.6,650.7 1192.7,649.9 1194.9,649.9 1197.0,650.0 1200.0,648.4 1202.2,649.0 1204.4,650.1 1206.6,650.5 1208.8,650.9 1211.0,651.1 1213.2,652.0 1215.4,652.7 1217.6,652.9 1219.8,653.7 1222.1,653.7 1224.3,655.0 1226.5,655.3 1228.7,656.3 1230.8,656.3 1233.0,656.2 1235.1,656.1 1237.3,657.2 1239.4,656.6 1241.6,657.2 1243.7,657.2 1245.8,656.4 1247.9,656.0 1250.0,655.5 1252.1,654.8 1254.1,655.3 1256.2,655.0 1258.3,655.3 1260.3,655.2 1262.4,655.0 1264.5,655.1 1266.5,655.2 1268.6,655.9 1270.7,657.3 1272.9,658.9 1275.0,661.4 1277.1,661.8 1279.3,661.5 1281.4,661.5 1283.6,661.8 1285.7,662.0 1287.9,662.6 1290.0,662.6 1292.3,661.1 1294.7,659.4 1297.0,658.1 1299.3,658.4 1301.6,658.2 1303.9,657.9 1306.2,657.9 1308.5,658.0 1310.5,656.0 1312.5,654.1 1314.5,652.0 1316.5,650.3 1318.5,649.2 1320.5,648.6 1322.5,649.3 1324.6,649.7 1326.6,650.2 1328.6,649.9 1330.7,650.2 1332.7,650.5 1334.7,650.9 1336.8,652.4 1338.8,654.5 1340.8,655.8 1342.9,657.4 1345.0,658.0 1347.0,659.5 1349.3,658.7 1351.7,657.4 1354.0,655.4 1356.4,654.0 1358.7,651.9 1360.8,652.5 1362.8,653.3 1364.8,653.4 1366.9,653.6 1369.0,654.0 1371.0,653.7 1371,663 0,663" fill="#fff"/></g>
</svg>
</body></html>
